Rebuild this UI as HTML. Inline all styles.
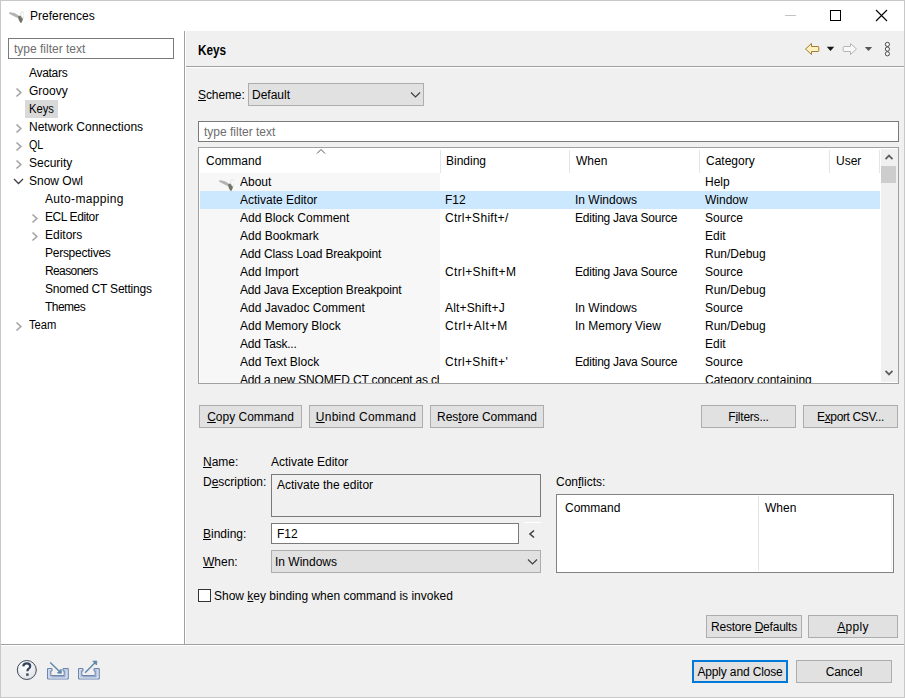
<!DOCTYPE html>
<html><head><meta charset="utf-8">
<style>
*{box-sizing:border-box;margin:0;padding:0}
html,body{width:905px;height:698px;overflow:hidden;background:#f0f0f0}
body{position:relative;font-family:"Liberation Sans",sans-serif;font-size:12px;color:#000}
.a{position:absolute}
.t{position:absolute;white-space:pre;line-height:18px;height:18px}
.u{text-decoration:underline;text-underline-offset:1px}
.btn{position:absolute;background:#e1e1e1;border:1px solid #adadad}
.tf{position:absolute;background:#fff;border:1px solid #7a7a7a}
</style></head><body>
<div class="a" style="left:0px;top:0px;width:905px;height:698px;border:1px solid #c8c8c8"></div>
<div class="a" style="left:1px;top:1px;width:903px;height:30px;background:#fff"></div>
<svg class="a" style="left:8px;top:8px" width="16" height="16" viewBox="0 0 16 16"><path d="M1 4.3 C4 4.1 7.6 5.4 10.6 7.4 L11.2 10.4 C7.6 9 4.2 7.2 1.4 5.9 Z" fill="#b2b5af"/><path d="M10.2 8.2 C11.4 7.4 14 7.6 15 9.6 C15.3 11.6 14.2 13.8 13 15.2 C11.8 14.4 10.6 12 10.2 10 Z" fill="#72766a"/><path d="M12.6 5.8 C12.8 3.4 15.6 2.8 16.2 5.4 C16.6 7.6 15.8 9.6 14.8 10.6 C13.6 9.6 12.6 8 12.6 5.8 Z" fill="#fbfbfb" stroke="#c9ccc9" stroke-width="0.6"/></svg>
<div class="t" style="left:30px;top:7px">Preferences</div>
<div class="a" style="left:785px;top:15px;width:11px;height:1px;background:#c4c4c4"></div>
<div class="a" style="left:830px;top:10px;width:11px;height:11px;border:1px solid #000"></div>
<svg class="a" style="left:875px;top:9px" width="13" height="13" viewBox="0 0 13 13"><path d="M1 1L12 12M12 1L1 12" stroke="#000" stroke-width="1.1"/></svg>
<div class="a" style="left:1px;top:31px;width:183px;height:613px;background:#fff"></div>
<div class="tf" style="left:8px;top:38px;width:166px;height:21px"></div>
<div class="t" style="left:14px;top:40px;color:#6d6d6d">type filter text</div>
<div class="a" style="left:25px;top:100px;width:33px;height:18px;background:#d9d9d9"></div>
<div class="t" style="left:29px;top:64px;letter-spacing:-0.300px">Avatars</div>
<div class="t" style="left:29px;top:82px">Groovy</div>
<div class="t" style="left:29px;top:100px;transform:scaleX(0.936);transform-origin:0 0">Keys</div>
<div class="t" style="left:29px;top:118px">Network Connections</div>
<div class="t" style="left:29px;top:136px;transform:scaleX(0.894);transform-origin:0 0">QL</div>
<div class="t" style="left:29px;top:154px">Security</div>
<div class="t" style="left:29px;top:172px">Snow Owl</div>
<div class="t" style="left:45px;top:190px;letter-spacing:0.345px">Auto-mapping</div>
<div class="t" style="left:45px;top:208px;letter-spacing:-0.411px">ECL Editor</div>
<div class="t" style="left:45px;top:226px">Editors</div>
<div class="t" style="left:45px;top:244px;letter-spacing:-0.264px">Perspectives</div>
<div class="t" style="left:45px;top:262px;letter-spacing:-0.612px">Reasoners</div>
<div class="t" style="left:45px;top:280px;letter-spacing:-0.206px">Snomed CT Settings</div>
<div class="t" style="left:45px;top:298px;letter-spacing:-0.540px">Themes</div>
<div class="t" style="left:29px;top:316px;transform:scaleX(0.934);transform-origin:0 0">Team</div>
<svg class="a" style="left:0;top:0" width="60" height="340" viewBox="0 0 60 340">
<g fill="none" stroke="#a6a6a6" stroke-width="1.7">
<path d="M16.5 88.5L20.8 92.5L16.5 96.5"/>
<path d="M16.5 124.5L20.8 128.5L16.5 132.5"/>
<path d="M16.5 142.5L20.8 146.5L16.5 150.5"/>
<path d="M16.5 160.5L20.8 164.5L16.5 168.5"/>
<path d="M32.5 214.5L36.8 218.5L32.5 222.5"/>
<path d="M32.5 232.5L36.8 236.5L32.5 240.5"/>
<path d="M16.5 322.5L20.8 326.5L16.5 330.5"/>
</g>
<path d="M14 179L18.5 183.5L23 179" fill="none" stroke="#404040" stroke-width="1.3"/>
</svg>
<div class="a" style="left:184px;top:31px;width:1px;height:614px;background:#a0a0a0"></div>
<div class="a" style="left:185px;top:31px;width:1px;height:613px;background:#fff"></div>
<div class="a" style="left:1px;top:644px;width:903px;height:1px;background:#a0a0a0"></div>
<div class="a" style="left:1px;top:645px;width:903px;height:1px;background:#fff"></div>
<div class="t" style="left:198px;top:41px;transform:scaleX(0.936);transform-origin:0 0;font-weight:bold;font-size:14px;transform:scaleX(0.84);transform-origin:0 0">Keys</div>
<div class="a" style="left:186px;top:66px;width:718px;height:1px;background:#a0a0a0"></div>
<div class="a" style="left:186px;top:67px;width:718px;height:1px;background:#fff"></div>
<svg class="a" style="left:800px;top:38px" width="100" height="22" viewBox="800 38 100 22">
<path d="M805.5 49 L811.5 43.5 L811.5 46.5 L818 46.5 Q818.8 46.5 818.8 47.3 L818.8 50.7 Q818.8 51.5 818 51.5 L811.5 51.5 L811.5 54.5 Z" fill="#fff1bd" stroke="#a27c31" stroke-width="1" stroke-linejoin="round"/>
<path d="M826.8 46.8 L834.2 46.8 L830.5 50.9 Z" fill="#151515"/>
<path d="M856.5 49 L850.5 43.5 L850.5 46.5 L844 46.5 Q843.2 46.5 843.2 47.3 L843.2 50.7 Q843.2 51.5 844 51.5 L850.5 51.5 L850.5 54.5 Z" fill="#f9f9f9" stroke="#b4b4b4" stroke-width="1" stroke-linejoin="round"/>
<path d="M864.8 47 L872.2 47 L868.5 51 Z" fill="#585858"/>
<circle cx="887.4" cy="44.4" r="2.1" fill="#f5f5f5" stroke="#3c3c3c" stroke-width="0.9"/>
<circle cx="887.4" cy="49.1" r="2.1" fill="#f5f5f5" stroke="#3c3c3c" stroke-width="0.9"/>
<circle cx="887.4" cy="53.8" r="2.1" fill="#f5f5f5" stroke="#3c3c3c" stroke-width="0.9"/>
</svg>
<div class="t" style="left:198px;top:86px;letter-spacing:-0.1px"><span class="u">S</span>cheme:</div>
<div class="a" style="left:248px;top:83px;width:176px;height:23px;background:#e1e1e1;border:1px solid #adadad"></div>
<div class="t" style="left:252px;top:86px">Default</div>
<svg class="a" style="left:410px;top:91px" width="11" height="8" viewBox="0 0 11 8"><path d="M1 1.5L5.5 6L10 1.5" fill="none" stroke="#404040" stroke-width="1.2"/></svg>
<div class="tf" style="left:198px;top:121px;width:701px;height:21px"></div>
<div class="t" style="left:204px;top:123px;color:#6d6d6d">type filter text</div>
<div class="a" style="left:198px;top:147px;width:701px;height:237px;background:#fff;border:1px solid #a0a0a0"></div>
<div class="a" style="left:200px;top:148px;width:680px;height:235px;overflow:hidden">
<div class="a" style="left:0px;top:25px;width:240px;height:210px;background:#f7f7f7"></div>
<div class="a" style="left:0px;top:43px;width:680px;height:18px;background:#cce8ff"></div>
<div class="a" style="left:240px;top:2px;width:1px;height:23px;background:#e5e5e5"></div>
<div class="a" style="left:369px;top:2px;width:1px;height:23px;background:#e5e5e5"></div>
<div class="a" style="left:499px;top:2px;width:1px;height:23px;background:#e5e5e5"></div>
<div class="a" style="left:629px;top:2px;width:1px;height:23px;background:#e5e5e5"></div>
<div class="a" style="left:679px;top:2px;width:1px;height:23px;background:#e5e5e5"></div>
<div class="t" style="left:6px;top:4px">Command</div>
<div class="t" style="left:246px;top:4px">Binding</div>
<div class="t" style="left:376px;top:4px">When</div>
<div class="t" style="left:506px;top:4px">Category</div>
<div class="t" style="left:636px;top:4px">User</div>
<svg class="a" style="left:116px;top:0px" width="10" height="7" viewBox="0 0 10 7"><path d="M1 5.5L5 1.5L9 5.5" fill="none" stroke="#555" stroke-width="1"/></svg>
<div class="a" style="left:40px;top:25px;width:199px;height:18px;overflow:hidden"><div class="t" style="left:0px;top:0px">About</div></div>
<div class="a" style="left:505px;top:25px;width:124px;height:18px;overflow:hidden"><div class="t" style="left:0px;top:0px">Help</div></div>
<div class="a" style="left:40px;top:43px;width:199px;height:18px;overflow:hidden"><div class="t" style="left:0px;top:0px">Activate Editor</div></div>
<div class="t" style="left:245px;top:43px">F12</div>
<div class="t" style="left:375px;top:43px">In Windows</div>
<div class="a" style="left:505px;top:43px;width:124px;height:18px;overflow:hidden"><div class="t" style="left:0px;top:0px">Window</div></div>
<div class="a" style="left:40px;top:61px;width:199px;height:18px;overflow:hidden"><div class="t" style="left:0px;top:0px">Add Block Comment</div></div>
<div class="t" style="left:245px;top:61px;letter-spacing:0.291px">Ctrl+Shift+/</div>
<div class="t" style="left:375px;top:61px;letter-spacing:-0.239px">Editing Java Source</div>
<div class="a" style="left:505px;top:61px;width:124px;height:18px;overflow:hidden"><div class="t" style="left:0px;top:0px">Source</div></div>
<div class="a" style="left:40px;top:79px;width:199px;height:18px;overflow:hidden"><div class="t" style="left:0px;top:0px">Add Bookmark</div></div>
<div class="a" style="left:505px;top:79px;width:124px;height:18px;overflow:hidden"><div class="t" style="left:0px;top:0px">Edit</div></div>
<div class="a" style="left:40px;top:97px;width:199px;height:18px;overflow:hidden"><div class="t" style="left:0px;top:0px;letter-spacing:-0.175px">Add Class Load Breakpoint</div></div>
<div class="a" style="left:505px;top:97px;width:124px;height:18px;overflow:hidden"><div class="t" style="left:0px;top:0px">Run/Debug</div></div>
<div class="a" style="left:40px;top:115px;width:199px;height:18px;overflow:hidden"><div class="t" style="left:0px;top:0px">Add Import</div></div>
<div class="t" style="left:245px;top:115px;letter-spacing:0.391px">Ctrl+Shift+M</div>
<div class="t" style="left:375px;top:115px;letter-spacing:-0.239px">Editing Java Source</div>
<div class="a" style="left:505px;top:115px;width:124px;height:18px;overflow:hidden"><div class="t" style="left:0px;top:0px">Source</div></div>
<div class="a" style="left:40px;top:133px;width:199px;height:18px;overflow:hidden"><div class="t" style="left:0px;top:0px;letter-spacing:-0.186px">Add Java Exception Breakpoint</div></div>
<div class="a" style="left:505px;top:133px;width:124px;height:18px;overflow:hidden"><div class="t" style="left:0px;top:0px">Run/Debug</div></div>
<div class="a" style="left:40px;top:151px;width:199px;height:18px;overflow:hidden"><div class="t" style="left:0px;top:0px">Add Javadoc Comment</div></div>
<div class="t" style="left:245px;top:151px;letter-spacing:0.160px">Alt+Shift+J</div>
<div class="t" style="left:375px;top:151px">In Windows</div>
<div class="a" style="left:505px;top:151px;width:124px;height:18px;overflow:hidden"><div class="t" style="left:0px;top:0px">Source</div></div>
<div class="a" style="left:40px;top:169px;width:199px;height:18px;overflow:hidden"><div class="t" style="left:0px;top:0px">Add Memory Block</div></div>
<div class="t" style="left:245px;top:169px;letter-spacing:0.611px">Ctrl+Alt+M</div>
<div class="t" style="left:375px;top:169px">In Memory View</div>
<div class="a" style="left:505px;top:169px;width:124px;height:18px;overflow:hidden"><div class="t" style="left:0px;top:0px">Run/Debug</div></div>
<div class="a" style="left:40px;top:187px;width:199px;height:18px;overflow:hidden"><div class="t" style="left:0px;top:0px;letter-spacing:-0.240px">Add Task...</div></div>
<div class="a" style="left:505px;top:187px;width:124px;height:18px;overflow:hidden"><div class="t" style="left:0px;top:0px">Edit</div></div>
<div class="a" style="left:40px;top:205px;width:199px;height:18px;overflow:hidden"><div class="t" style="left:0px;top:0px">Add Text Block</div></div>
<div class="t" style="left:245px;top:205px;letter-spacing:0.336px">Ctrl+Shift+'</div>
<div class="t" style="left:375px;top:205px;letter-spacing:-0.239px">Editing Java Source</div>
<div class="a" style="left:505px;top:205px;width:124px;height:18px;overflow:hidden"><div class="t" style="left:0px;top:0px">Source</div></div>
<div class="a" style="left:40px;top:223px;width:199px;height:18px;overflow:hidden"><div class="t" style="left:0px;top:0px;letter-spacing:-0.18px">Add a new SNOMED CT concept as child</div></div>
<div class="a" style="left:505px;top:223px;width:124px;height:18px;overflow:hidden"><div class="t" style="left:0px;top:0px">Category containing</div></div>
<svg class="a" style="left:18px;top:28px" width="16" height="16" viewBox="0 0 16 16"><path d="M1 4.3 C4 4.1 7.6 5.4 10.6 7.4 L11.2 10.4 C7.6 9 4.2 7.2 1.4 5.9 Z" fill="#b2b5af"/><path d="M10.2 8.2 C11.4 7.4 14 7.6 15 9.6 C15.3 11.6 14.2 13.8 13 15.2 C11.8 14.4 10.6 12 10.2 10 Z" fill="#72766a"/><path d="M12.6 5.8 C12.8 3.4 15.6 2.8 16.2 5.4 C16.6 7.6 15.8 9.6 14.8 10.6 C13.6 9.6 12.6 8 12.6 5.8 Z" fill="#fbfbfb" stroke="#c9ccc9" stroke-width="0.6"/></svg>
</div>
<div class="a" style="left:881px;top:149px;width:17px;height:233px;background:#f0f0f0"></div>
<div class="a" style="left:881px;top:166px;width:15px;height:17px;background:#cdcdcd"></div>
<svg class="a" style="left:884px;top:153px" width="10" height="8" viewBox="0 0 10 8"><path d="M1.5 6.2L5 2.7L8.5 6.2" fill="none" stroke="#606060" stroke-width="1.9"/></svg>
<svg class="a" style="left:884px;top:369px" width="10" height="8" viewBox="0 0 10 8"><path d="M1.5 1.8L5 5.3L8.5 1.8" fill="none" stroke="#606060" stroke-width="1.9"/></svg>
<div class="btn" style="left:199px;top:405px;width:103px;height:23px;border:1px solid #adadad"></div><div class="t" style="left:199px;top:408px;width:103px;text-align:center"><span class="u">C</span>opy Command</div>
<div class="btn" style="left:309px;top:405px;width:114px;height:23px;border:1px solid #adadad"></div><div class="t" style="left:309px;top:408px;width:114px;text-align:center;letter-spacing:0.269px"><span class="u">U</span>nbind Command</div>
<div class="btn" style="left:430px;top:405px;width:114px;height:23px;border:1px solid #adadad"></div><div class="t" style="left:430px;top:408px;width:114px;text-align:center;letter-spacing:-0.057px">Res<span class="u">t</span>ore Command</div>
<div class="btn" style="left:701px;top:405px;width:95px;height:23px;border:1px solid #adadad"></div><div class="t" style="left:701px;top:408px;width:95px;text-align:center;letter-spacing:-0.222px">F<span class="u">i</span>lters...</div>
<div class="btn" style="left:803px;top:405px;width:95px;height:23px;border:1px solid #adadad"></div><div class="t" style="left:803px;top:408px;width:95px;text-align:center;letter-spacing:-0.358px">E<span class="u">x</span>port CSV...</div>
<div class="t" style="left:203px;top:453px"><span class="u">N</span>ame:</div>
<div class="t" style="left:271px;top:453px">Activate Editor</div>
<div class="t" style="left:203px;top:473px">D<span class="u">e</span>scription:</div>
<div class="a" style="left:271px;top:474px;width:270px;height:43px;border:1px solid #7a7a7a"></div>
<div class="t" style="left:277px;top:476px">Activate the editor</div>
<div class="t" style="left:203px;top:525px"><span class="u">B</span>inding:</div>
<div class="tf" style="left:271px;top:523px;width:248px;height:21px"></div>
<div class="t" style="left:277px;top:525px">F12</div>
<div class="a" style="left:524px;top:522px;width:17px;height:1px;background:#fff"></div>
<svg class="a" style="left:527px;top:529px" width="10" height="10" viewBox="0 0 10 10"><path d="M7 1.5L3 5L7 8.5" fill="none" stroke="#404040" stroke-width="1.6"/></svg>
<div class="t" style="left:203px;top:553px"><span class="u">W</span>hen:</div>
<div class="a" style="left:271px;top:550px;width:270px;height:23px;background:#e1e1e1;border:1px solid #adadad"></div>
<div class="t" style="left:275px;top:553px">In Windows</div>
<svg class="a" style="left:527px;top:558px" width="11" height="8" viewBox="0 0 11 8"><path d="M1 1.5L5.5 6L10 1.5" fill="none" stroke="#404040" stroke-width="1.2"/></svg>
<div class="a" style="left:198px;top:589px;width:13px;height:13px;background:#fff;border:1px solid #333"></div>
<div class="t" style="left:214px;top:587px">Show <span class="u">k</span>ey binding when command is invoked</div>
<div class="t" style="left:556px;top:473px">Con<span class="u">f</span>licts:</div>
<div class="a" style="left:556px;top:494px;width:338px;height:79px;background:#fff;border:1px solid #828282"></div>
<div class="a" style="left:758px;top:496px;width:1px;height:75px;background:#e5e5e5"></div>
<div class="a" style="left:891px;top:496px;width:1px;height:75px;background:#f0f0f0"></div>
<div class="t" style="left:565px;top:499px">Command</div>
<div class="t" style="left:765px;top:499px">When</div>
<div class="btn" style="left:706px;top:615px;width:96px;height:23px;border:1px solid #adadad"></div><div class="t" style="left:706px;top:618px;width:96px;text-align:center;letter-spacing:-0.220px">Restore <span class="u">D</span>efaults</div>
<div class="btn" style="left:808px;top:615px;width:90px;height:23px;border:1px solid #adadad"></div><div class="t" style="left:808px;top:618px;width:90px;text-align:center;letter-spacing:0.325px"><span class="u">A</span>pply</div>
<svg class="a" style="left:10px;top:655px" width="100" height="30" viewBox="10 655 100 30">
<defs>
<radialGradient id="hg" cx="0.4" cy="0.3" r="0.8"><stop offset="0" stop-color="#ffffff"/><stop offset="1" stop-color="#dcdfe4"/></radialGradient>
<linearGradient id="tg" x1="0" y1="0" x2="0" y2="1"><stop offset="0" stop-color="#c9d6ec"/><stop offset="1" stop-color="#8ea4ca"/></linearGradient>
</defs>
<circle cx="26.8" cy="670" r="9.5" fill="url(#hg)" stroke="#3f4a5a" stroke-width="1"/>
<path d="M23.3 666.3 Q23.5 663.4 26.8 663.4 Q30.2 663.4 30.2 666.2 Q30.2 668 28.4 669 Q27.4 669.6 27.4 671.3" fill="none" stroke="#34445c" stroke-width="2.2"/>
<rect x="26.2" y="673.4" width="2.4" height="2.4" fill="#34445c"/>
<path d="M47.5 668.5 H52 V671 H50.8 V675.5 H64.2 V671 H63 V668.5 H68.3 V679 H47.5 Z" fill="#b7c6e0" stroke="#6f87ad" stroke-width="1"/>
<path d="M48.8 678 V669.7 H50.8 M66.9 669.7 V678 H48.8" fill="none" stroke="#e2e9f6" stroke-width="0.9"/>
<path d="M52.2 676.7 H65" stroke="#8298bd" stroke-width="0.8"/>
<path d="M50.2 662.4 L59.3 671.2" stroke="#5b86a8" stroke-width="1.4"/>
<path d="M61.4 673.3 L57.4 673 L61.1 669.2 Z" fill="#5b86a8" stroke="#5b86a8" stroke-width="0.8"/>
<path d="M78.5 668.5 H83 V671 H81.8 V675.5 H95.2 V671 H94 V668.5 H99.3 V679 H78.5 Z" fill="#b7c6e0" stroke="#6f87ad" stroke-width="1"/>
<path d="M79.8 678 V669.7 H81.8 M97.9 669.7 V678 H79.8" fill="none" stroke="#e2e9f6" stroke-width="0.9"/>
<path d="M83.2 676.7 H96" stroke="#8298bd" stroke-width="0.8"/>
<path d="M85.1 672.7 L95 662.7" stroke="#5b86a8" stroke-width="1.4"/>
<path d="M96.8 661 L96.6 665 L92.8 661.2 Z" fill="#5b86a8" stroke="#5b86a8" stroke-width="0.8"/>
</svg>
<div class="btn" style="left:692px;top:660px;width:96px;height:23px;border:2px solid #0078d7"></div><div class="t" style="left:692px;top:663px;width:96px;text-align:center;letter-spacing:-0.150px">Apply and Close</div>
<div class="btn" style="left:796px;top:660px;width:96px;height:23px;border:1px solid #adadad"></div><div class="t" style="left:796px;top:663px;width:96px;text-align:center;letter-spacing:-0.140px">Cancel</div>
</body></html>
